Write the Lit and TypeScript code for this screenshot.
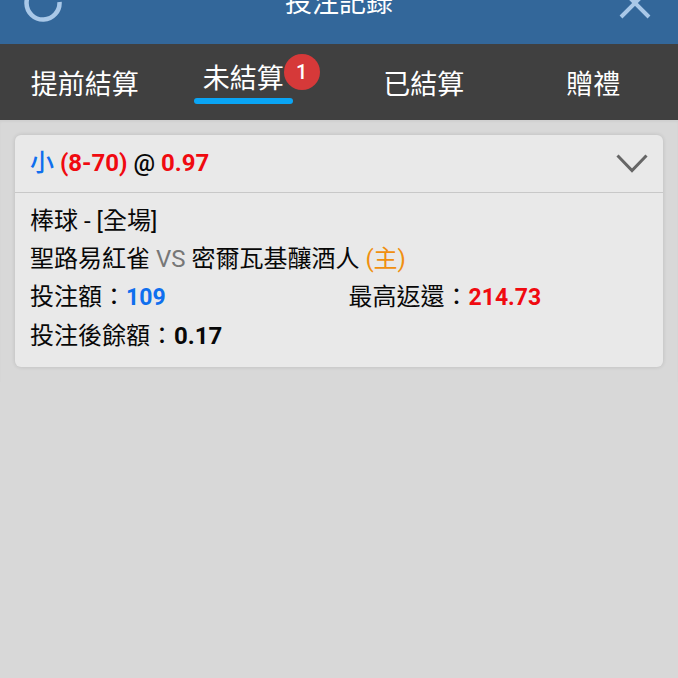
import { LitElement, html, css, nothing } from "lit";
import { customElement, property, state } from "lit/decorators.js";
import { classMap } from "lit/directives/class-map.js";

interface Bet {
  pick: string;
  line: string;
  odds: string;
  sport: string;
  away: string;
  home: string;
  stake: string;
  maxReturn: string;
  balance: string;
}

const BETS: Bet[] = [
  {
    pick: "小",
    line: "(8-70)",
    odds: "0.97",
    sport: "棒球 - [全場]",
    away: "聖路易紅雀",
    home: "密爾瓦基釀酒人",
    stake: "109",
    maxReturn: "214.73",
    balance: "0.17",
  },
];

const TABS: { label: string; count?: number }[] = [
  { label: "提前結算" },
  { label: "未結算", count: 1 },
  { label: "已結算" },
  { label: "贈禮" },
];

@customElement("bet-card")
export class BetCard extends LitElement {
  @property({ attribute: false }) bet!: Bet;
  @state() private open = true;

  static styles = css`
    :host {
      display: block;
      background: #e9e9e9;
      border-radius: 6px;
      box-shadow: 0 0 4px rgba(0, 0, 0, 0.14);
      color: #080808;
    }
    .head {
      display: flex;
      align-items: center;
      justify-content: space-between;
      box-sizing: border-box;
      width: 100%;
      height: 58px;
      margin: 0;
      padding: 0 15px 6px;
      border: 0;
      border-bottom: 1px solid #c8c8c8;
      background: none;
      font: inherit;
      color: inherit;
      text-align: left;
      cursor: pointer;
    }
    .body {
      padding: 9px 0 12px 15px;
      line-height: 38px;
    }
    p {
      margin: 0;
    }
    .pair {
      display: grid;
      grid-template-columns: 1fr 1fr;
      column-gap: 4px;
    }
    .pair b {
      font-size: 23px;
    }
    b {
      font-weight: 700;
    }
    .pick,
    .at {
      font-weight: 500;
    }
    .blue {
      color: #0f6fee;
    }
    .red {
      color: #f00a10;
    }
    .vs {
      color: #777;
    }
    .host {
      color: #f09010;
    }
    svg {
      display: block;
      margin-top: 6px;
    }
  `;

  render() {
    const b = this.bet;
    return html`
      <button class="head" aria-expanded=${this.open} @click=${() => (this.open = !this.open)}>
        <span>
          <span class="pick blue">${b.pick}</span> <b class="red">${b.line}</b>
          <span class="at">@</span> <b class="red">${b.odds}</b>
        </span>
        <svg width="32" height="20" viewBox="0 0 32 20" aria-hidden="true">
          <path d="M1.5 1.5 L16 16.5 L30.5 1.5" fill="none" stroke="#666" stroke-width="3" />
        </svg>
      </button>
      ${this.open
        ? html`<div class="body">
            <p>${b.sport}</p>
            <p>${b.away} <span class="vs">VS</span> ${b.home} <span class="host">(主)</span></p>
            <div class="pair">
              <p>投注額：<b class="blue">${b.stake}</b></p>
              <p>最高返還：<b class="red">${b.maxReturn}</b></p>
            </div>
            <p>投注後餘額：<b>${b.balance}</b></p>
          </div>`
        : nothing}
    `;
  }
}

@customElement("app-root")
export class AppRoot extends LitElement {
  @state() private active = 1;

  static styles = css`
    :host {
      display: block;
      min-height: 100vh;
      background: #d8d8d8;
      font-family: Roboto, "Noto Sans CJK TC", sans-serif;
      font-size: 24px;
    }
    button {
      margin: 0;
      padding: 0;
      border: 0;
      background: none;
      font: inherit;
      color: inherit;
      cursor: pointer;
    }
    header {
      display: flex;
      align-items: flex-end;
      height: 44px;
      overflow: hidden;
      background: #33679a;
      color: #fff;
    }
    .bar {
      flex: 1;
      display: flex;
      align-items: center;
      justify-content: space-between;
      height: 82px;
      padding: 0 24px;
    }
    h1 {
      margin: 0;
      font-size: 27px;
      font-weight: 400;
      line-height: 40px;
    }
    svg {
      display: block;
    }
    nav {
      display: grid;
      grid-template-columns: repeat(4, 1fr);
      height: 76px;
      background: #404040;
      color: #fff;
      font-size: 27px;
      line-height: 36px;
    }
    .tab {
      display: flex;
      align-items: center;
      justify-content: center;
      padding-top: 6px;
    }
    .label {
      position: relative;
    }
    .on .label {
      margin: 0 22px 6px 0;
      padding: 0 9px;
    }
    .on .label::after {
      content: "";
      display: block;
      height: 6px;
      margin: 1px -9px 0;
      border-radius: 3px;
      background: #0aa5f5;
    }
    .badge {
      position: absolute;
      top: -7px;
      right: -27px;
      width: 36px;
      height: 36px;
      border-radius: 50%;
      background: #d63939;
      font-size: 20px;
      font-weight: 500;
      text-align: center;
    }
    main {
      padding: 15px;
      box-shadow: inset 0 2px 2px rgba(0, 0, 0, 0.04);
    }
  `;

  render() {
    return html`
      <header>
        <div class="bar">
          <button aria-label="重新整理">
            <svg width="38" height="38" viewBox="0 0 38 38" aria-hidden="true">
              <path d="M19 2.5 A16.5 16.5 0 1 0 35.5 18" fill="none" stroke="#a9c8e8" stroke-width="4.5" />
            </svg>
          </button>
          <h1>投注記錄</h1>
          <button aria-label="關閉">
            <svg width="38" height="38" viewBox="0 0 38 38" aria-hidden="true">
              <path d="M5 5 L33 33 M33 5 L5 33" fill="none" stroke="#a9c8e8" stroke-width="4" />
            </svg>
          </button>
        </div>
      </header>
      <nav>
        ${TABS.map(
          (t, i) => html`<button
            class=${classMap({ tab: true, on: i === this.active })}
            aria-pressed=${i === this.active}
            @click=${() => (this.active = i)}
          >
            <span class="label"
              >${t.label}${t.count ? html`<span class="badge">${t.count}</span>` : nothing}</span
            >
          </button>`
        )}
      </nav>
      <main>${BETS.map((b) => html`<bet-card .bet=${b}></bet-card>`)}</main>
    `;
  }
}
